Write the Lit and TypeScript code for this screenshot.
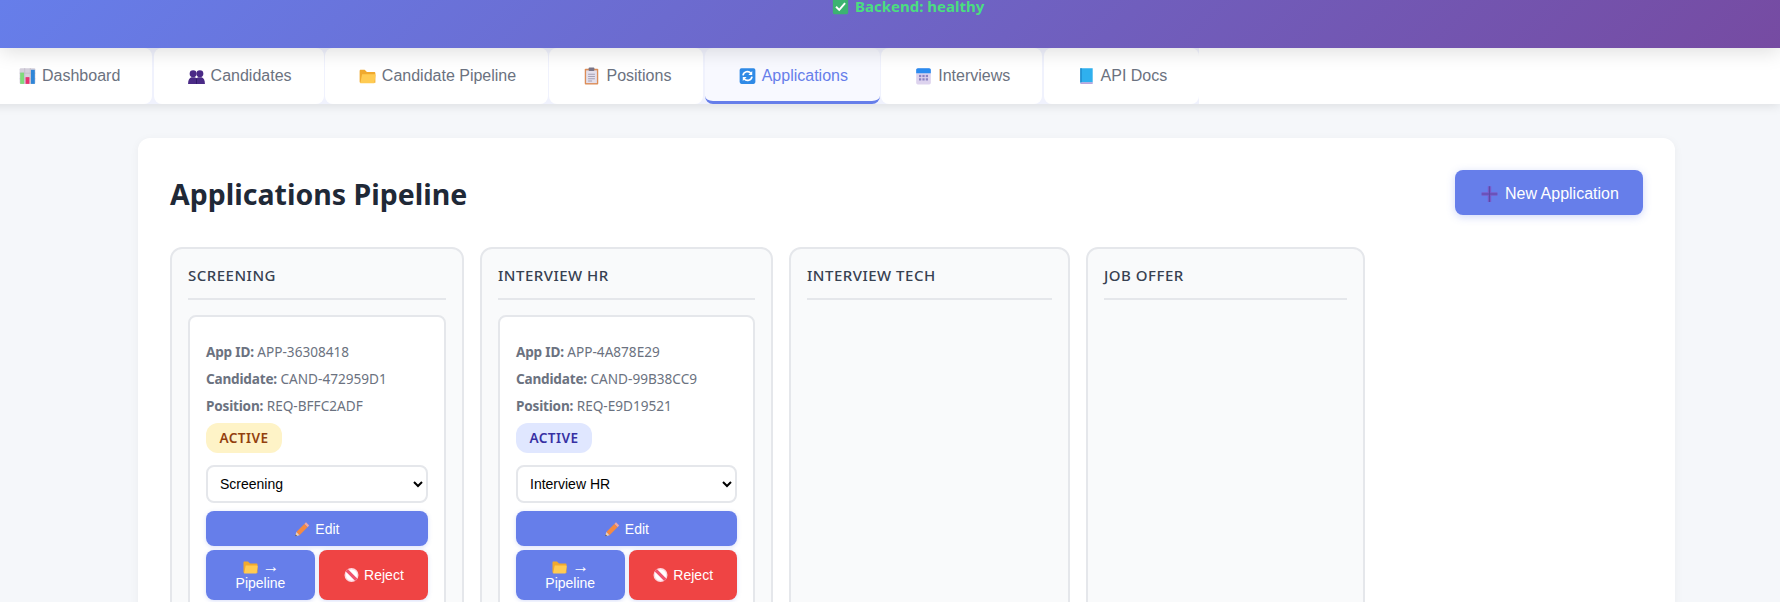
import { LitElement, html, css, svg } from 'lit';
import { customElement } from 'lit/decorators.js';
import { map } from 'lit/directives/map.js';

const ICONS: Record<string, any> = {
  chart: svg`<rect x="1" y="1" width="14" height="14" rx="1" fill="#d5d0dc"/><path d="M5.5 1v14M10.5 1v14M1 5.5h14M1 10.500h14" stroke="#bdb8c6" stroke-width=".6"/><rect x="1.500" y="5" width="3.400" height="10" fill="#7edb7a"/><rect x="6.300" y="9" width="3.400" height="6" fill="#e8306f"/><rect x="11.100" y="2.500" width="3.400" height="12.500" fill="#2f86d8"/>`,
  people: svg`<g fill="#4a2a86"><circle cx="5" cy="6" r="3.100"/><path d="M.5 15c0-3.600 1.300-5.500 3-6h3c1.700.5 3 2.400 3 6z"/><circle cx="11" cy="6" r="3.100"/><path d="M6.500 15c0-3.600 1.300-5.500 3-6h3c1.700.5 3 2.400 3 6z"/></g><path d="M8 10v5" stroke="#2f1a66" stroke-width=".8"/>`,
  folder: svg`<path d="M1 3.500c0-.6.400-1 1-1h3.500l2 2H14c.6 0 1 .4 1 1V14H2c-.6 0-1-.4-1-1z" fill="#f0a92e"/><path d="M1.600 14.500 3.200 6.500h11.200c.5 0 .9.400.8.900l-1.200 7.100z" fill="#ffcb52"/>`,
  clipboard: svg`<rect x="2" y="1.500" width="12" height="14" rx=".8" fill="#dc8d58"/><rect x="3.200" y="3" width="9.600" height="11.300" fill="#e3dfec"/><rect x="5.500" y=".5" width="5" height="3" rx=".6" fill="#7b7688"/><path d="M5 6.500h6M5 8.500h6M5 10.500h6M5 12.500h3.500" stroke="#a5a0b4" stroke-width=".9"/>`,
  repeat: svg`<rect x="1" y="1" width="14" height="14" rx="1.600" fill="#2f8ae6"/><path d="M4 7.500A4 4 0 0 1 11 5.500M12 8.500A4 4 0 0 1 5 10.500" fill="none" stroke="#fff" stroke-width="1.500"/><path d="M12.200 3.500v3.700H8.800zM3.800 12.500V8.800h3.400z" fill="#fff"/>`,
  calendar: svg`<rect x="1.500" y="1" width="13" height="14.500" rx="1.500" fill="#ddd3ee"/><path d="M1.500 5.500V2.500C1.500 1.700 2.200 1 3 1h10c.8 0 1.500.7 1.500 1.500v3z" fill="#2b8cf0"/><g fill="#8d84c4"><rect x="4" y="7" width="2" height="2"/><rect x="7" y="7" width="2" height="2"/><rect x="10" y="7" width="2" height="2"/><rect x="4" y="10" width="2" height="2"/><rect x="7" y="10" width="2" height="2"/><rect x="10" y="10" width="2" height="2"/></g>`,
  book: svg`<path d="M2.500 1h11v12.800H4c-.8 0-1.500.3-1.500 1.200z" fill="#2fb0ee"/><path d="M2.500 15c0-.9.700-1.500 1.500-1.500h9.500V15z" fill="#b9a5dc"/><path d="M2.500 1h1.200v12.500H2.500z" fill="#1d86c9"/>`,
  check: svg`<rect x=".8" y=".8" width="14.400" height="14.400" rx="1.500" fill="#3cb371"/><path d="M3.800 8.200 6.800 11.200 12.300 4.800" fill="none" stroke="#fff" stroke-width="1.800"/>`,
  plus: svg`<path d="M6.500 1h3v5.500H15v3H9.500V15h-3V9.500H1v-3h5.500z" fill="#7a5ccb"/><path d="M1 8h14M8 1v14" stroke="#5a4aa8" stroke-width="1"/>`,
  pencil: svg`<path d="M11.500 1.300 14.700 4.500 13 6.200 9.800 3z" fill="#f2a7a0"/><path d="M9.800 3 13 6.200 5 14.200 1.800 11z" fill="#f58a42"/><path d="M1.800 11 5 14.200 .8 15.200z" fill="#f3d3ae"/><path d="M.8 15.200 1.200 13.600 2.400 14.800z" fill="#333"/>`,
  ban: svg`<circle cx="8" cy="8" r="7" fill="#ffd6de"/><circle cx="8" cy="8" r="5.600" fill="#fff"/><path d="M3.700 4.300 4.300 3.700 12.300 11.700 11.700 12.300z" stroke="#f0536e" stroke-width="2.400"/>`,
};

function icon(name: string) {
  return html`<svg class="ic" viewBox="0 0 16 16" aria-hidden="true">${ICONS[name]}</svg>`;
}

const TABS = [
  { label: 'Dashboard', icon: 'chart' },
  { label: 'Candidates', icon: 'people' },
  { label: 'Candidate Pipeline', icon: 'folder' },
  { label: 'Positions', icon: 'clipboard' },
  { label: 'Applications', icon: 'repeat', active: true },
  { label: 'Interviews', icon: 'calendar' },
  { label: 'API Docs', icon: 'book' },
];

const STAGES = ['Screening', 'Interview HR', 'Interview Tech', 'Job Offer'];

const COLUMNS = [
  {
    title: 'Screening',
    width: 'wide',
    apps: [{ id: 'APP-36308418', candidate: 'CAND-472959D1', position: 'REQ-BFFC2ADF', stage: 'Screening', tone: 'amber' }],
  },
  {
    title: 'Interview HR',
    width: 'mid',
    apps: [{ id: 'APP-4A878E29', candidate: 'CAND-99B38CC9', position: 'REQ-E9D19521', stage: 'Interview HR', tone: 'indigo' }],
  },
  { title: 'Interview Tech', width: 'tech', apps: [] },
  { title: 'Job Offer', width: 'narrow', apps: [] },
];

@customElement('app-root')
export class AppRoot extends LitElement {
  static styles = css`
    :host {
      display: block;
      height: 602px;
      overflow: hidden;
      background: #f5f7fa;
      font-family: 'Noto Sans', sans-serif;
    }
    header {
      position: relative;
      z-index: 2;
      height: 48px;
      background: linear-gradient(135deg, #667eea 0%, #764ba2 100%);
      box-shadow: 0 4px 20px rgba(0, 0, 0, 0.13);
    }
    .clip {
      height: 48px;
      overflow: hidden;
    }
    .status {
      display: flex;
      align-items: center;
      gap: 6px;
      margin: -5px 0 0 832px;
      height: 22px;
      color: #4ade80;
      font-size: 15px;
      font-weight: 700;
      white-space: nowrap;
    }
    .status .ic {
      width: 17px;
      height: 17px;
    }
    nav {
      position: relative;
      z-index: 1;
      height: 56px;
      margin-left: -15px;
      background: #ffffff;
      box-shadow: 0 2px 10px rgba(0, 0, 0, 0.1);
    }
    .tabs {
      display: inline-flex;
      gap: 1.3px;
      background: #f0f2fd;
    }
    .tab {
      display: flex;
      align-items: center;
      box-sizing: border-box;
      height: 56px;
      padding: 0 32px;
      gap: 4px;
      background: #fff;
      border-radius: 8px;
      color: #6b7280;
      font: 16px 'Liberation Sans', Arial, sans-serif;
      white-space: nowrap;
    }
    .tab .ic {
      width: 21px;
      height: 18px;
    }
    .tab.active {
      padding-top: 3px;
      background: #f8f9ff;
      color: #667eea;
      border-bottom: 3px solid #667eea;
    }
    .sheet {
      box-sizing: border-box;
      width: 1537px;
      margin: 34px 0 0 138px;
      padding: 32px;
      background: #fff;
      border-radius: 12px;
      box-shadow: 0 2px 10px rgba(0, 0, 0, 0.05);
    }
    .head {
      display: flex;
      justify-content: space-between;
      align-items: center;
      margin-bottom: 32px;
    }
    h2 {
      margin: 0;
      padding-top: 3px;
      color: #1f2937;
      font-size: 28.5px;
      font-weight: 700;
      line-height: 42px;
    }
    .btn {
      border: none;
      border-radius: 8px;
      background: #667eea;
      color: #fff;
      font-family: 'Liberation Sans', Arial, sans-serif;
    }
    .new {
      display: flex;
      align-items: center;
      gap: 5px;
      box-sizing: border-box;
      width: 188px;
      height: 45px;
      padding: 2px 0 0 24px;
      font-size: 16px;
      box-shadow: 0 2px 8px rgba(102, 126, 234, 0.3);
    }
    .new .ic {
      width: 21px;
      height: 18px;
    }
    .board {
      display: flex;
      gap: 16px;
      align-items: stretch;
    }
    .col {
      box-sizing: border-box;
      min-height: 400px;
      padding: 16px;
      background: #f9fafb;
      border: 2px solid #e5e7eb;
      border-radius: 12px;
    }
    .col.wide {
      width: 294px;
    }
    .col.mid {
      width: 293px;
    }
    .col.tech {
      width: 281px;
    }
    .col.narrow {
      width: 279px;
    }
    h3 {
      margin: 0 0 15px;
      padding-bottom: 12px;
      border-bottom: 2px solid #e5e7eb;
      color: #374151;
      font-size: 15px;
      font-weight: 500;
      line-height: 21px;
      letter-spacing: 0.5px;
      text-transform: uppercase;
    }
    .card {
      padding: 16px;
      background: #fff;
      border: 2px solid #e5e7eb;
      border-radius: 8px;
    }
    .card p {
      margin: 0;
      color: #6b7280;
      font-size: 13.6px;
      line-height: 27px;
      white-space: nowrap;
    }
    .card p b {
      letter-spacing: -0.2px;
    }
    .card p:first-child {
      margin-top: 5px;
    }
    .badge {
      display: inline-block;
      margin: 4px 0 12px;
      padding: 0 13.5px;
      height: 30px;
      line-height: 30px;
      border-radius: 12px;
      font-size: 13.6px;
      font-weight: 600;
      letter-spacing: 0.4px;
    }
    .badge.amber {
      background: #fef3c7;
      color: #92400e;
    }
    .badge.indigo {
      background: #e0e7ff;
      color: #3730a3;
    }
    select {
      display: block;
      box-sizing: border-box;
      width: 100%;
      height: 38px;
      margin-bottom: 8px;
      padding: 0 8px;
      background: #fff;
      border: 2px solid #e5e7eb;
      border-radius: 8px;
      color: #000;
      font: 14px 'Liberation Sans', Arial, sans-serif;
    }
    .actions {
      display: grid;
      grid-template-columns: 1fr 1fr;
      gap: 4px;
    }
    .actions .btn {
      font-size: 14px;
      line-height: 16px;
      padding: 0 12px;
      box-shadow: 0 1px 4px rgba(102, 126, 234, 0.25);
    }
    .actions .ic {
      width: 17px;
      height: 16px;
      vertical-align: -3px;
    }
    .arrow {
      font-size: 17px;
    }
    .edit {
      grid-column: 1 / 3;
      height: 35px;
    }
    .split {
      height: 50px;
    }
    .reject {
      background: #ef4444;
    }
  `;

  renderCard(app: any) {
    return html`
      <div class="card">
        <p><b>App ID:</b> ${app.id}</p>
        <p><b>Candidate:</b> ${app.candidate}</p>
        <p><b>Position:</b> ${app.position}</p>
        <span class="badge ${app.tone}">ACTIVE</span>
        <select>
          ${map(STAGES, (s) => html`<option ?selected=${s === app.stage}>${s}</option>`)}
        </select>
        <div class="actions">
          <button class="btn edit">${icon('pencil')} Edit</button>
          <button class="btn split">${icon('folder')} <span class="arrow">→</span> Pipeline</button>
          <button class="btn split reject">${icon('ban')} Reject</button>
        </div>
      </div>
    `;
  }

  render() {
    return html`
      <header>
        <div class="clip">
          <div class="status">${icon('check')}<span>Backend: healthy</span></div>
        </div>
      </header>
      <nav>
        <div class="tabs">
          ${map(TABS, (t) => html`
            <div class="tab ${t.active ? 'active' : ''}">${icon(t.icon)}<span>${t.label}</span></div>
          `)}
        </div>
      </nav>
      <main class="sheet">
        <div class="head">
          <h2>Applications Pipeline</h2>
          <button class="btn new">${icon('plus')}<span>New Application</span></button>
        </div>
        <div class="board">
          ${map(COLUMNS, (c) => html`
            <section class="col ${c.width}">
              <h3>${c.title}</h3>
              ${map(c.apps, (a) => this.renderCard(a))}
            </section>
          `)}
        </div>
      </main>
    `;
  }
}
